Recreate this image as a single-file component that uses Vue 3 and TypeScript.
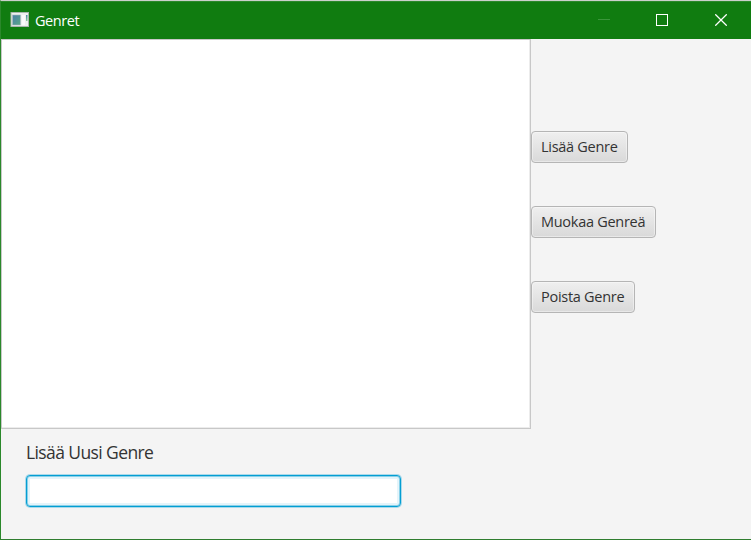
<script setup lang="ts">
import { ref } from 'vue'

const genreName = ref<string>('')
const actions: { label: string; kind: string }[] = [
  { label: 'Lisää Genre', kind: 'add' },
  { label: 'Muokaa Genreä', kind: 'edit' },
  { label: 'Poista Genre', kind: 'remove' },
]
</script>

<template>
  <div class="window">
    <header class="titlebar">
      <svg class="app-icon" width="20" height="16" viewBox="0 0 20 16">
        <defs>
          <linearGradient id="pane" x1="0" y1="0" x2="1" y2="1">
            <stop offset="0" stop-color="#4c7fa9" />
            <stop offset="1" stop-color="#5aa787" />
          </linearGradient>
          <linearGradient id="strip" x1="0" y1="0" x2="0" y2="1">
            <stop offset="0" stop-color="#4c86a4" />
            <stop offset="1" stop-color="#8cc79a" />
          </linearGradient>
        </defs>
        <rect x="1" y="0.5" width="17.5" height="14" fill="#eef0ef" stroke="#a9b5ad" />
        <rect x="2.5" y="3" width="8" height="10" fill="url(#pane)" stroke="#a7b9bd" stroke-width="0.6" />
        <rect x="12" y="3" width="3" height="10" fill="#fafafa" />
        <rect x="16" y="3" width="1.5" height="6" fill="url(#strip)" />
      </svg>
      <span class="title">Genret</span>
      <div class="controls">
        <svg class="minimize" width="12" height="12" viewBox="0 0 12 12"><path d="M0 5.5H12" stroke="#3b963b" /></svg>
        <svg width="12" height="12" viewBox="0 0 12 12"><rect x="0.5" y="0.5" width="11" height="11" fill="none" stroke="#fff" /></svg>
        <svg width="12" height="12" viewBox="0 0 12 12"><path d="M0.3 0.3L11.7 11.7M11.7 0.3L0.3 11.7" stroke="#fff" stroke-width="1.25" /></svg>
      </div>
    </header>
    <main class="content">
      <div class="list"></div>
      <div class="actions">
        <button v-for="a in actions" :key="a.kind" type="button" :class="['btn', a.kind]">{{ a.label }}</button>
      </div>
    </main>
    <footer class="entry">
      <label class="entry-label" for="genre">Lisää Uusi Genre</label>
      <input id="genre" v-model="genreName" class="field" type="text" />
    </footer>
  </div>
</template>

<style>
body { margin: 0; overflow: hidden; }
</style>

<style scoped>
.window {
  box-sizing: border-box;
  width: 751px;
  height: 540px;
  display: flex;
  flex-direction: column;
  background: #f4f4f4;
  border-left: 1px solid #2b882b;
  border-bottom: 1px solid #2f7d2f;
  border-top: 1px solid #cbd0cb;
  font-family: "Open Sans", "Noto Sans", sans-serif;
  color: #333;
}
.titlebar {
  box-sizing: border-box;
  height: 38px;
  flex: none;
  display: flex;
  align-items: center;
  padding: 0 24px 1px 9px;
  background: #107c10;
  border-top: 1px solid #2b882b;
}
.app-icon { display: block; }
.title { margin: 1px 0 0 5px; color: #fff; font-size: 14.5px; line-height: 20px; letter-spacing: -0.45px; }
.controls { margin-left: auto; display: flex; gap: 47px; }
.controls svg { display: block; }
.controls .minimize { margin-right: -1px; }
.content { display: flex; height: 390px; flex: none; }
.list {
  box-sizing: border-box;
  width: 530px;
  background: #fff;
  border: 1px solid #c8c8c8;
  box-shadow: inset -1px -1px #ececec;
}
.actions { display: flex; flex-direction: column; align-items: flex-start; gap: 43px; padding-top: 92px; }
.btn {
  box-sizing: border-box;
  height: 32px;
  padding: 0 0 0 9px;
  text-align: left;
  white-space: nowrap;
  font: 14.5px/20px "Open Sans", "Noto Sans", sans-serif;
  letter-spacing: -0.28px;
  color: #333;
  background: linear-gradient(#efefef, #d9d9d9);
  border: 1px solid #b5b5b5;
  border-radius: 4px;
  box-shadow: inset 0 0 0 1px rgba(255, 255, 255, 0.4);
}
.add { width: 97px; }
.edit { width: 125px; }
.remove { width: 104px; }
.entry { display: flex; flex-direction: column; align-items: flex-start; padding: 11px 0 0 25px; }
.entry-label { font-size: 17.5px; line-height: 24px; letter-spacing: -0.6px; }
.field {
  box-sizing: border-box;
  width: 375px;
  height: 32px;
  margin: 11px 0 0;
  padding: 0 9px;
  font: 15px "Open Sans", "Noto Sans", sans-serif;
  background: #fff;
  border: 1px solid #039ed3;
  border-radius: 4px;
  outline: none;
  box-shadow: 0 0 0 1px rgba(3, 158, 211, 0.3), inset 0 0 0 1px #8ad1e9, inset 0 0 0 3px #e4f4fa;
}
</style>
